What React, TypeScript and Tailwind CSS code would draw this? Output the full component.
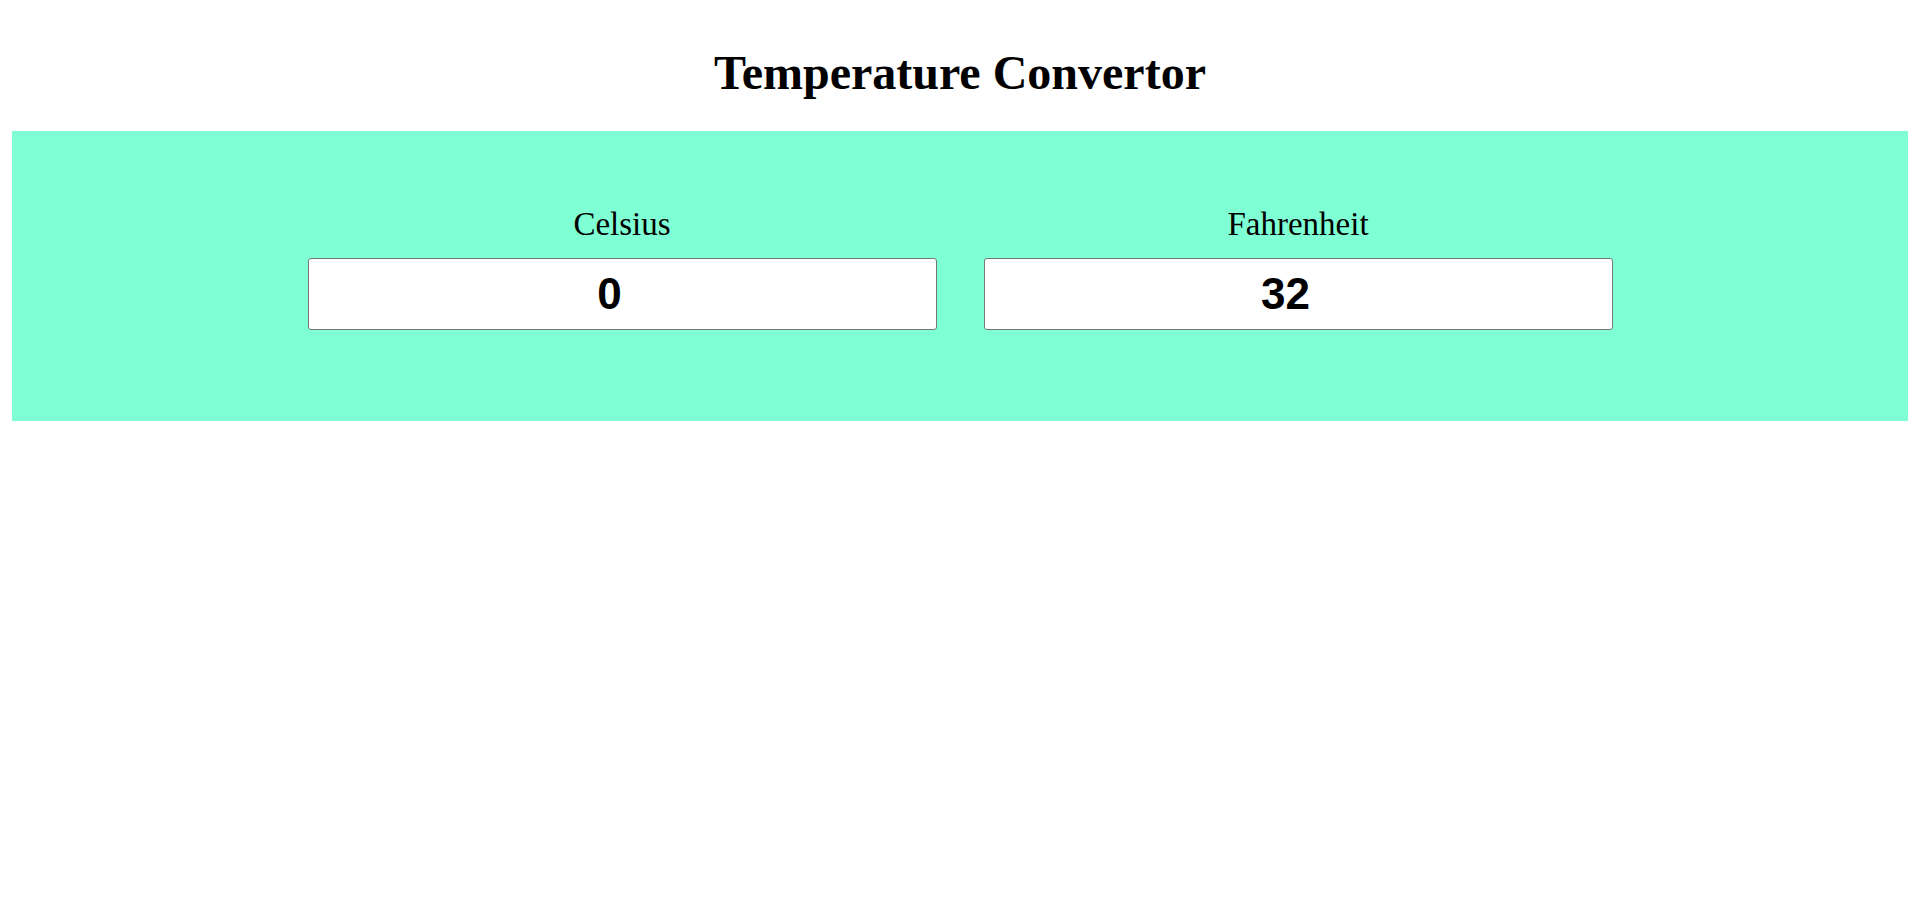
import { useState } from 'react'

export default function App() {
  const [celsius, setCelsius] = useState('0')
  const [fahrenheit, setFahrenheit] = useState('32')

  const onCelsius = (v: string) => {
    setCelsius(v)
    const n = parseFloat(v)
    setFahrenheit(isNaN(n) ? '' : String(Math.round((n * 9 / 5 + 32) * 100) / 100))
  }

  const onFahrenheit = (v: string) => {
    setFahrenheit(v)
    const n = parseFloat(v)
    setCelsius(isNaN(n) ? '' : String(Math.round(((n - 32) * 5 / 9) * 100) / 100))
  }

  return (
    <div className="min-h-screen bg-white px-[12px] text-black font-['Liberation_Serif','Times_New_Roman',serif]">
      <h1 className="pt-[45px] pb-[31px] text-center text-[48px] leading-[55px] font-bold">
        Temperature Convertor
      </h1>

      <div className="bg-[#7fffd4] pt-[74px] pb-[91px]">
        <div className="flex justify-center gap-[47px]">
          <div className="flex w-[629px] flex-col items-center">
            <label htmlFor="celsius" className="text-[33px] leading-[38px]">
              Celsius
            </label>
            <input
              id="celsius"
              type="number"
              value={celsius}
              onChange={e => onCelsius(e.target.value)}
              className="mt-[15px] h-[72px] w-full rounded-[3px] border border-[#767676] bg-white pr-[10px] text-center text-[44px] font-bold font-['Liberation_Sans',Arial,sans-serif] outline-none"
            />
          </div>
          <div className="flex w-[629px] flex-col items-center">
            <label htmlFor="fahrenheit" className="text-[33px] leading-[38px]">
              Fahrenheit
            </label>
            <input
              id="fahrenheit"
              type="number"
              value={fahrenheit}
              onChange={e => onFahrenheit(e.target.value)}
              className="mt-[15px] h-[72px] w-full rounded-[3px] border border-[#767676] bg-white pr-[10px] text-center text-[44px] font-bold font-['Liberation_Sans',Arial,sans-serif] outline-none"
            />
          </div>
        </div>
      </div>
    </div>
  )
}
